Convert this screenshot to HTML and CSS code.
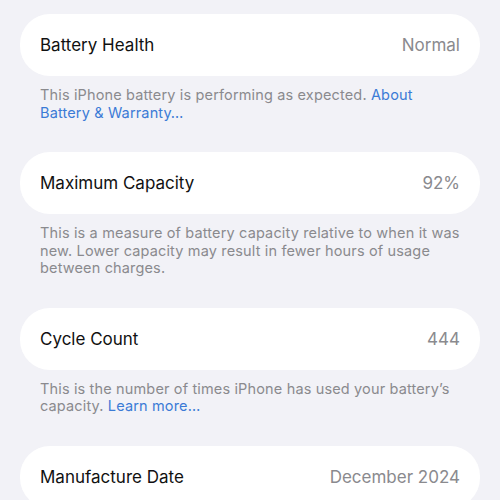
FILE: index.html
```html
<!DOCTYPE html>
<html>
<head>
<meta charset="utf-8">
<link rel="stylesheet" href="styles.css">
</head>
<body>
<main class="list">
  <section class="group">
    <div class="card"><span class="label">Battery Health</span><span class="value">Normal</span></div>
    <p class="footer">This iPhone battery is performing as expected. <span class="link">About Battery &amp; Warranty…</span></p>
  </section>
  <section class="group">
    <div class="card"><span class="label">Maximum Capacity</span><span class="value">92%</span></div>
    <p class="footer">This is a measure of battery capacity relative to when it was new. Lower capacity may result in fewer hours of usage between charges.</p>
  </section>
  <section class="group">
    <div class="card"><span class="label">Cycle Count</span><span class="value">444</span></div>
    <p class="footer">This is the number of times iPhone has used your battery’s capacity. <span class="link">Learn more…</span></p>
  </section>
  <section class="group">
    <div class="card"><span class="label">Manufacture Date</span><span class="value">December 2024</span></div>
  </section>
</main>
</body>
</html>
```

FILE: styles.css
```css
html, body {
  margin: 0;
  padding: 0;
  background: #f2f2f7;
  height: 100%;
  overflow: hidden;
}
body {
  font-family: Inter, "Noto Sans", "Liberation Sans", sans-serif;
  -webkit-font-smoothing: antialiased;
}
.list {
  padding: 14px 20px 0;
  display: flex;
  flex-direction: column;
  gap: 31px;
}
.group {
  display: flex;
  flex-direction: column;
}
.card {
  background: #ffffff;
  height: 62px;
  border-radius: 30px;
  padding: 0 20px;
  display: flex;
  align-items: center;
  justify-content: space-between;
  font-size: 17px;
  letter-spacing: 0;
}
.label {
  color: #111111;
}
.value {
  color: #8a8a8e;
}
.footer {
  margin: 0;
  padding: 10px 20px 0;
  font-size: 14.5px;
  line-height: 17.5px;
  color: #8a8a8e;
  letter-spacing: 0.15px;
}
.link {
  color: #3b7bd6;
}
```
